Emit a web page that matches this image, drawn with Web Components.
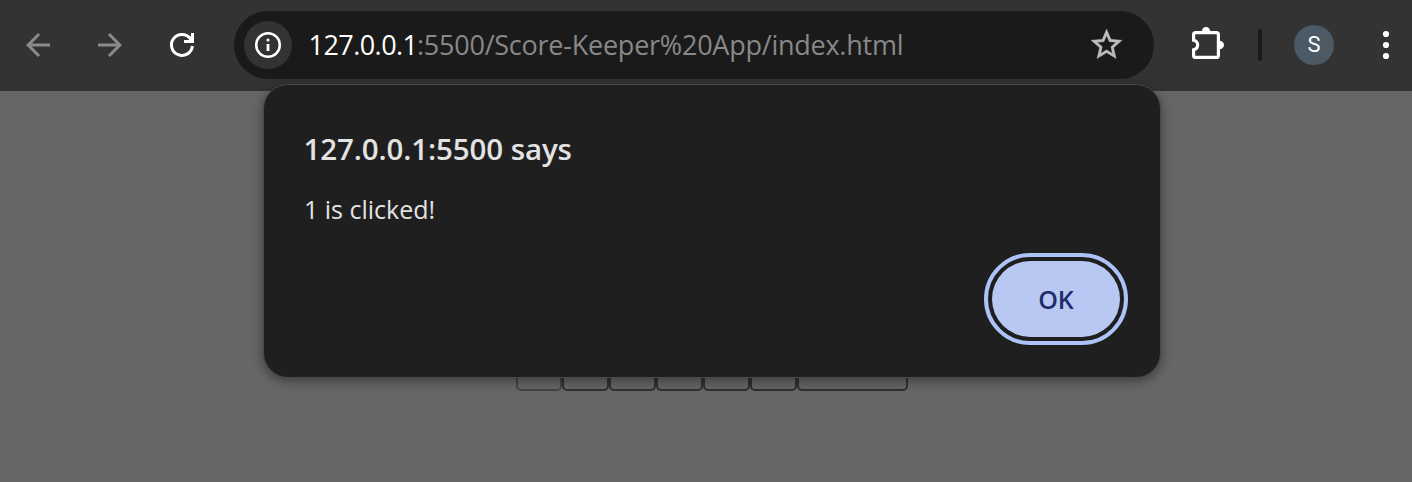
<!DOCTYPE html>
<html lang="en">
<head>
<meta charset="utf-8">
<title>Score Keeper</title>
<style>
html,body{margin:0;height:100%;overflow:hidden;background:#666}
body{font-family:"Open Sans","Noto Sans",sans-serif}
</style>
</head>
<body>
<browser-window>
  <browser-toolbar slot="toolbar">
    <address-bar slot="address"><span slot="host">127.0.0.1</span><span slot="path">:5500/Score-Keeper%20App/index.html</span></address-bar>
    <user-avatar slot="profile">S</user-avatar>
  </browser-toolbar>
  <score-buttons slot="page"></score-buttons>
  <alert-dialog slot="dialog"><span slot="title">127.0.0.1:5500 says</span><span slot="message">1 is clicked!</span><ok-button slot="action">OK</ok-button></alert-dialog>
</browser-window>
<script>
const define=(name,html)=>{
  const t=document.createElement('template');t.innerHTML=html;
  customElements.define(name,class extends HTMLElement{
    constructor(){super();this.attachShadow({mode:'open'}).append(t.content.cloneNode(true));}
  });
};
define('browser-window',`<style>
:host{display:flex;flex-direction:column;position:relative;width:1412px;height:482px;overflow:hidden;background:#666}
main{flex:1;display:flex;justify-content:center;padding:254px 0 0 12px;box-sizing:border-box}
.layer{position:absolute;left:263px;top:84px}
</style><slot name="toolbar"></slot><main><slot name="page"></slot></main><div class="layer"><slot name="dialog"></slot></div>`);

define('browser-toolbar',`<style>
:host{display:flex;align-items:center;height:91px;flex:none;box-sizing:border-box;padding:0 8px 1px 20px;background:#333}
svg{display:block;flex:none}
.nav{display:flex;gap:36px;width:214px}
.bar{width:4px;height:32px;border-radius:2px;background:#1a1a1a;margin:0 32px}
.puzzle{margin-left:36px}
.menu{margin-left:auto}
</style>
<div class="nav">
<svg width="36" height="36" viewBox="0 0 24 24" fill="#8a8a8a"><path d="M20 11H7.83l5.59-5.59L12 4l-8 8 8 8 1.41-1.41L7.83 13H20z"/></svg>
<svg width="36" height="36" viewBox="0 0 24 24" fill="#8a8a8a"><path d="M4 11h12.17l-5.59-5.59L12 4l8 8-8 8-1.41-1.41L16.17 13H4z"/></svg>
<svg width="36" height="36" viewBox="0 0 36 36" fill="none" stroke="#fff" stroke-width="3"><path d="M28.4 19A10.5 10.5 0 1 1 26.2 11.4"/><path d="M28.5 6v8.5H20"/><path d="M23.5 9l5 1v4h-3z" fill="#fff" stroke="none"/></svg>
</div>
<slot name="address"></slot>
<svg class="puzzle" width="36" height="36" viewBox="0 0 36 36"><path d="M5.6 5.6H26.4Q28.4 5.6 28.4 7.6V28.4Q28.4 30.4 26.4 30.4H5.6Q3.6 30.4 3.6 28.4V22.8C9 21.6 9 14.4 3.6 13.2V7.6Q3.6 5.6 5.6 5.6Z" fill="none" stroke="#fff" stroke-width="3.2"/><path d="M11.8 4.5a4.2 4.5 0 0 1 8.4 0zM29.5 13.8a4.5 4.2 0 0 1 0 8.4z" fill="#fff"/></svg>
<div class="bar"></div>
<slot name="profile"></slot>
<svg class="menu" width="36" height="36" fill="#fff"><circle cx="18" cy="7" r="3.1"/><circle cx="18" cy="18" r="3.1"/><circle cx="18" cy="29" r="3.1"/></svg>`);

define('address-bar',`<style>
:host{display:flex;align-items:center;flex:none;box-sizing:border-box;width:920px;height:68px;border-radius:34px;padding:0 29px 0 10px;background:#1a1a1a}
.info{display:flex;width:48px;height:48px;border-radius:50%;background:#333;align-items:center;justify-content:center;flex:none}
.url{flex:1;display:flex;white-space:pre;font-size:27px;line-height:36px;margin-left:16.5px;color:#888}
.host{color:#fff;width:108.5px;letter-spacing:-.55px}
.path{letter-spacing:-.24px}
svg{display:block;flex:none}
</style>
<div class="info"><svg width="28" height="28" fill="none"><circle cx="14" cy="14" r="11.8" stroke="#fff" stroke-width="2.5"/><path d="M14 13v7" stroke="#fff" stroke-width="2.8"/><circle cx="14" cy="9" r="1.5" fill="#fff"/></svg></div>
<div class="url"><span class="host"><slot name="host"></slot></span><span class="path"><slot name="path"></slot></span></div>
<svg width="37.2" height="37.2" viewBox="0 0 24 24" fill="#bdbdbd" stroke="#bdbdbd" stroke-width=".25"><path d="M22 9.24l-7.19-.62L12 2 9.19 8.63 2 9.24l5.46 4.73L5.82 21 12 17.27 18.18 21l-1.63-7.03zM12 15.4l-3.76 2.27 1-4.28-3.32-2.88 4.38-.38L12 6.1l1.71 4.04 4.38.38-3.32 2.88 1 4.28z"/></svg>`);

define('user-avatar',`<style>
:host{display:flex;align-items:center;justify-content:center;flex:none;width:40px;height:40px;border-radius:50%;background:#4b5a65;color:#fff;font:22px/40px Roboto,sans-serif}
</style><slot></slot>`);

define('score-buttons',`<style>
:host{display:flex;width:392px;height:46px}
i{box-sizing:border-box;height:46px;width:47px;border:2px solid #303030;border-radius:5px}
i:first-of-type{width:46px;border-color:#444}
i:last-of-type{width:auto;flex:1}
</style><i></i><i></i><i></i><i></i><i></i><i></i><i></i>`);

define('alert-dialog',`<style>
:host{display:flex;flex-direction:column;box-sizing:border-box;width:898px;height:294px;padding:42px 40px 0;border:1px solid #484848;border-radius:25px;background:#1f1f1f;color:#e3e3e3;box-shadow:0 3px 12px rgba(0,0,0,.42)}
.title{font-weight:600;font-size:29.5px;line-height:44px;white-space:pre;letter-spacing:-.1px;margin-left:-.5px}
.msg{font-size:25px;line-height:36px;margin-top:20px;white-space:pre;letter-spacing:0}
.action{display:flex;justify-content:flex-end;margin-top:34px}
</style><div class="title"><slot name="title"></slot></div><div class="msg"><slot name="message"></slot></div><div class="action"><slot name="action"></slot></div>`);

define('ok-button',`<style>
:host{display:flex;align-items:center;justify-content:center;box-sizing:border-box;width:128px;height:76px;border-radius:38px;background:#b9c8f3;outline:4px solid #adc2f6;outline-offset:4px;color:#1b2d6b;font-size:25px;font-weight:600;padding-bottom:1px}
</style><slot></slot>`);
</script>
</body>
</html>
